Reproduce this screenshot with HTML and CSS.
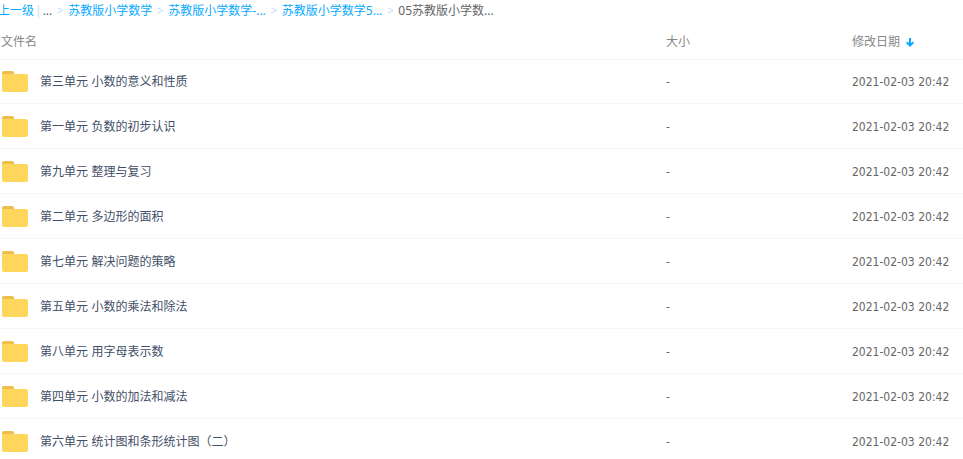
FILE: index.html
```html
<!DOCTYPE html>
<html lang="zh-CN">
<head>
<meta charset="utf-8">
<meta name="viewport" content="width=device-width, initial-scale=1.0">
<title>05苏教版小学数学</title>
<link rel="stylesheet" href="styles.css">
</head>
<body>

<!-- folder icon, shared by all rows -->
<svg width="0" height="0" class="defs">
	<symbol id="folder" viewBox="0 0 26 21">
		<path fill="#ecbe4b" d="M0 6V2Q0 0 2 0H10Q12 0 12 2V6Z"/>
		<path fill="#ffd65c" d="M0 3H24Q26 3 26 5V19Q26 21 24 21H2Q0 21 0 19Z"/>
	</symbol>
</svg>

<nav class="crumbs">
	<a class="up" href="#">上一级</a>
	<span class="bar">|</span>
	<span class="dots">...</span>
	<span class="sep">&gt;</span>
	<a href="#">苏教版小学数学</a>
	<span class="sep">&gt;</span>
	<a href="#">苏教版小学数学-...</a>
	<span class="sep">&gt;</span>
	<a href="#">苏教版小学数学5...</a>
	<span class="sep">&gt;</span>
	<span>05苏教版小学数...</span>
</nav>

<table class="files">
	<thead>
		<tr>
			<th class="name">文件名</th>
			<th class="size">大小</th>
			<th class="date">修改日期<svg class="arrow" width="8" height="9" viewBox="0 0 8 9"><path fill="none" stroke="#09aaff" stroke-width="2" d="M4 0V8M0.7 4.3L4 7.6L7.3 4.3"/></svg></th>
		</tr>
	</thead>
	<tbody>
		<tr><td><a href="#"><svg class="icon"><use href="#folder"/></svg>第三单元 小数的意义和性质</a></td><td>-</td><td>2021-02-03 20:42</td></tr>
		<tr><td><a href="#"><svg class="icon"><use href="#folder"/></svg>第一单元 负数的初步认识</a></td><td>-</td><td>2021-02-03 20:42</td></tr>
		<tr><td><a href="#"><svg class="icon"><use href="#folder"/></svg>第九单元 整理与复习</a></td><td>-</td><td>2021-02-03 20:42</td></tr>
		<tr><td><a href="#"><svg class="icon"><use href="#folder"/></svg>第二单元 多边形的面积</a></td><td>-</td><td>2021-02-03 20:42</td></tr>
		<tr><td><a href="#"><svg class="icon"><use href="#folder"/></svg>第七单元 解决问题的策略</a></td><td>-</td><td>2021-02-03 20:42</td></tr>
		<tr><td><a href="#"><svg class="icon"><use href="#folder"/></svg>第五单元 小数的乘法和除法</a></td><td>-</td><td>2021-02-03 20:42</td></tr>
		<tr><td><a href="#"><svg class="icon"><use href="#folder"/></svg>第八单元 用字母表示数</a></td><td>-</td><td>2021-02-03 20:42</td></tr>
		<tr><td><a href="#"><svg class="icon"><use href="#folder"/></svg>第四单元 小数的加法和减法</a></td><td>-</td><td>2021-02-03 20:42</td></tr>
		<tr><td><a href="#"><svg class="icon"><use href="#folder"/></svg>第六单元 统计图和条形统计图（二）</a></td><td>-</td><td>2021-02-03 20:42</td></tr>
	</tbody>
</table>

</body>
</html>
```
FILE: styles.css
```css
body {
	margin: 0;
	background: #fff;
	color: #666;
	font: 12px/20px "DejaVu Sans Condensed", "Noto Sans CJK SC", sans-serif;
	overflow: hidden;
}
a {
	color: #09aaff;
	text-decoration: none;
}
.defs {
	display: block;
}
/* breadcrumb */
.crumbs {
	display: flex;
	gap: 4px;
	padding-top: 1px;
	height: 21px;
	white-space: nowrap;
	font-family: "Noto Sans", "Noto Sans CJK SC", sans-serif;
}
.up {
	margin-left: -2px;
}
.bar {
	margin: 0 -3px;
}
.bar,
.sep {
	color: #c4dbfe;
}
.sep {
	width: 8px;
	text-align: center;
}
/* file list */
.files {
	width: 100%;
	table-layout: fixed;
	border-spacing: 0;
}
th,
td {
	box-sizing: border-box;
	padding: 0;
	text-align: left;
	white-space: nowrap;
}
th {
	height: 37px;
	padding-top: 2px;
	color: #888;
	font-weight: normal;
}
td {
	height: 45px;
	border-bottom: 1px solid #f2f6fd;
}
td + td {
	padding-top: 1px;
}
tbody tr:first-child td {
	border-top: 1px solid #f2f6fd;
}
th.name {
	padding-left: 1px;
}
.size {
	width: 186px;
}
.date {
	width: 111px;
}
.arrow {
	margin-left: 6px;
	vertical-align: -1px;
}
td a {
	display: flex;
	align-items: flex-end;
	gap: 12px;
	padding-left: 2px;
	color: #424e67;
}
.icon {
	width: 26px;
	height: 21px;
}
```
